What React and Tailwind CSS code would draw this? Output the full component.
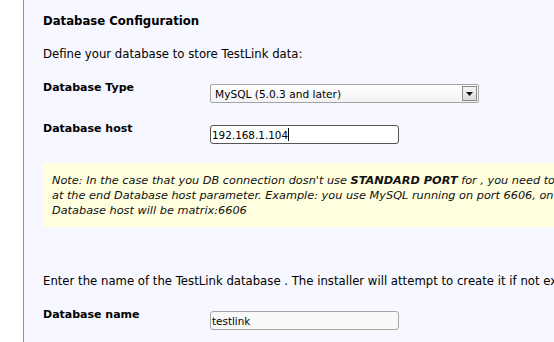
import React from 'react';

const font = { fontFamily: '"DejaVu Sans", Verdana, sans-serif' };

const Row = ({ label, children, className = '' }) => (
  <div className={`flex items-start ${className}`}>
    <div className="w-[167px] shrink-0 font-bold leading-[14px] text-[11px]">{label}</div>
    <div className="pt-[3px]">{children}</div>
  </div>
);

export default function App() {
  return (
    <div
      className="flex w-[554px] h-[342px] overflow-hidden bg-white text-[11.7px] text-black"
      style={font}
    >
      <div className="w-[23px] shrink-0 bg-white" />
      <div className="flex-1 min-w-0 border-l border-[#8090c8] bg-[#f7f7ff] pl-[19px] overflow-hidden whitespace-nowrap">
        {/* Title */}
        <div className="mt-[14px] font-bold leading-[14px]">Database Configuration</div>
        <div className="mt-[19px] leading-[14px]">Define your database to store TestLink data:</div>

        {/* Database type */}
        <Row label="Database Type" className="mt-[20px]">
          <div className="flex items-center w-[269px] h-[19px] border border-[#a5a5a5] rounded-[2px] bg-gradient-to-b from-white to-[#f2f2f2] pl-[4px] pr-[1px]">
            <span className="flex-1 text-[10.6px] leading-[14px]">MySQL (5.0.3 and later)</span>
            <span className="flex items-center justify-center w-[15px] h-[15px] border border-[#8a8a8a] bg-gradient-to-b from-[#f4f4f4] to-[#dcdcdc]">
              <svg width="7" height="4" viewBox="0 0 7 4">
                <path d="M0 0h7L3.5 4z" fill="#111" />
              </svg>
            </span>
          </div>
        </Row>

        {/* Database host */}
        <Row label="Database host" className="mt-[19px]">
          <div className="flex items-center w-[189px] h-[19px] border border-[#555] rounded-[3px] bg-white px-[1px] text-[10.4px] leading-[14px]">
            <span>192.168.1.104</span>
            <span className="w-px h-[13px] bg-black" />
          </div>
        </Row>

        {/* Note */}
        <div className="mt-[19px] bg-[#ffffe0] pt-[10px] pb-[9px] pl-[9px] italic text-[11.3px] leading-[15px] text-[#111]">
          <div>
            Note: In the case that you DB connection dosn't use <b>STANDARD PORT</b> for , you need to
          </div>
          <div>at the end Database host parameter. Example: you use MySQL running on port 6606, on</div>
          <div>Database host will be matrix:6606</div>
        </div>

        <div className="mt-[47px] leading-[14px]">
          Enter the name of the TestLink database . The installer will attempt to create it if not ex
        </div>

        {/* Database name */}
        <Row label="Database name" className="mt-[20px]">
          <div className="flex items-center w-[189px] h-[19px] border border-[#a5a5a5] rounded-[3px] bg-[#f8f8f8] px-[1px] text-[10.4px] leading-[14px]">
            testlink
          </div>
        </Row>
      </div>
    </div>
  );
}
